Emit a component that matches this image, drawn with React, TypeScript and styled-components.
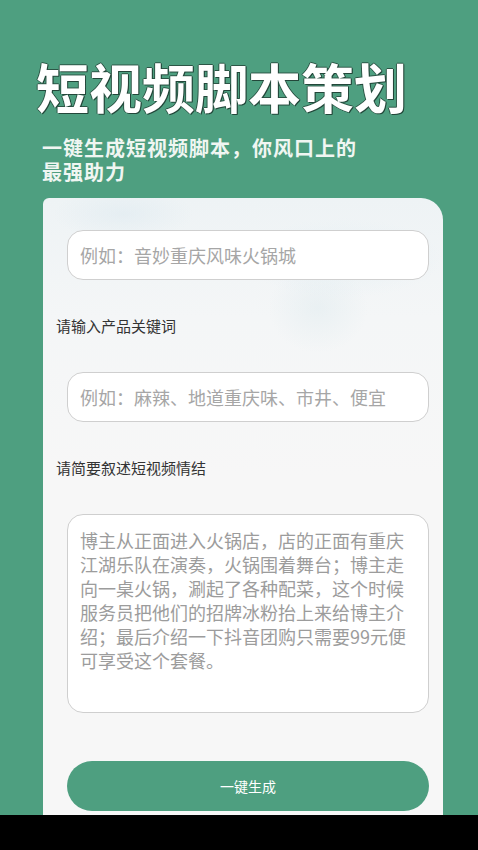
import * as React from 'react';
import styled, { createGlobalStyle } from 'styled-components';

const GlobalStyle = createGlobalStyle`
  html, body {
    margin: 0;
    padding: 0;
  }
  body {
    font-family: "Noto Sans CJK SC", "Noto Sans", sans-serif;
  }
`;

const GREEN = '#4e9f80';

const STORY =
  '博主从正面进入火锅店，店的正面有重庆江湖乐队在演奏，火锅围着舞台；博主走向一桌火锅，涮起了各种配菜，这个时候服务员把他们的招牌冰粉抬上来给博主介绍；最后介绍一下抖音团购只需要99元便可享受这个套餐。';

export default function App() {
  const [shop, setShop] = React.useState('');
  const [keywords, setKeywords] = React.useState('');
  const [story, setStory] = React.useState(STORY);

  return (
    <Screen>
      <GlobalStyle />
      <Main>
        <Header>
          <Title>短视频脚本策划</Title>
          <Subtitle>
            <SubLine>一键生成短视频脚本，你风口上的</SubLine>
            <SubLine>最强助力</SubLine>
          </Subtitle>
        </Header>
        <Card>
          <Input
            value={shop}
            onChange={(e) => setShop(e.target.value)}
            placeholder="例如：音妙重庆风味火锅城"
          />
          <Label>请输入产品关键词</Label>
          <Input
            value={keywords}
            onChange={(e) => setKeywords(e.target.value)}
            placeholder="例如：麻辣、地道重庆味、市井、便宜"
          />
          <Label>请简要叙述短视频情结</Label>
          <StoryBox value={story} onChange={(e) => setStory(e.target.value)} />
          <SubmitButton type="button">一键生成</SubmitButton>
        </Card>
      </Main>
      <NavBar />
    </Screen>
  );
}

const Screen = styled.div`
  width: 478px;
  height: 850px;
  display: flex;
  flex-direction: column;
  overflow: hidden;
`;

const Main = styled.div`
  flex: 1;
  display: flex;
  flex-direction: column;
  background: ${GREEN};
  min-height: 0;
`;

const NavBar = styled.div`
  height: 35px;
  background: #000;
`;

const Header = styled.div`
  padding: 56px 0 0 0;
  display: flex;
  flex-direction: column;
`;

const Title = styled.h1`
  margin: 0 0 0 36px;
  font-size: 53px;
  line-height: 60px;
  font-weight: 700;
  color: #fff;
  letter-spacing: 0;
  text-shadow: 1px 1px 0 #23473a, -1px 0 0 #2c5646, 0 -1px 0 #2c5646, 1px 0 0 #23473a;
`;

const Subtitle = styled.div`
  margin: 20px 0 0 42px;
  display: flex;
  flex-direction: column;
`;

const SubLine = styled.span`
  font-size: 20px;
  line-height: 24px;
  height: 24px;
  overflow: visible;
  font-weight: 700;
  letter-spacing: 1px;
  color: #f0f6f2;
`;

const Card = styled.div`
  flex: 1;
  margin: 14px 35px 0 43px;
  padding: 32px 14px 6px 13px;
  border-radius: 6px 22px 0 0;
  display: flex;
  flex-direction: column;
  background:
    radial-gradient(ellipse 70px 26px at 80px 16px, rgba(215, 230, 238, 0.4), transparent),
    radial-gradient(ellipse 100px 40px at 300px 60px, rgba(222, 236, 242, 0.45), transparent),
    radial-gradient(ellipse 50px 45px at 275px 110px, rgba(218, 232, 236, 0.4), transparent),
    linear-gradient(180deg, #eef3f5 0%, #f4f6f7 120px, #f7f7f7 280px);
`;

const fieldBase = `
  box-sizing: border-box;
  width: 362px;
  margin-left: 11px;
  background: #fff;
  border: 1px solid #cfcfcf;
  border-radius: 16px;
  font-family: "Noto Sans CJK SC", "Noto Sans", sans-serif;
  font-size: 18px;
  color: #999;
  outline: none;
`;

const Input = styled.input`
  ${fieldBase}
  height: 50px;
  padding: 0 12px;
  &::placeholder {
    color: #a6a6a6;
  }
`;

const Label = styled.div`
  margin: 36px 0 36px 0;
  font-size: 15px;
  line-height: 20px;
  color: #333;
`;

const StoryBox = styled.textarea`
  ${fieldBase}
  height: 199px;
  padding: 13px 17px 13px 12px;
  line-height: 24px;
  resize: none;
  color: #9c9c9c;
`;

const SubmitButton = styled.button`
  box-sizing: border-box;
  width: 362px;
  height: 50px;
  margin: 48px 0 0 11px;
  border: none;
  border-radius: 25px;
  background: ${GREEN};
  color: #fff;
  font-family: "Noto Sans CJK SC", "Noto Sans", sans-serif;
  font-size: 14px;
  cursor: pointer;
`;
